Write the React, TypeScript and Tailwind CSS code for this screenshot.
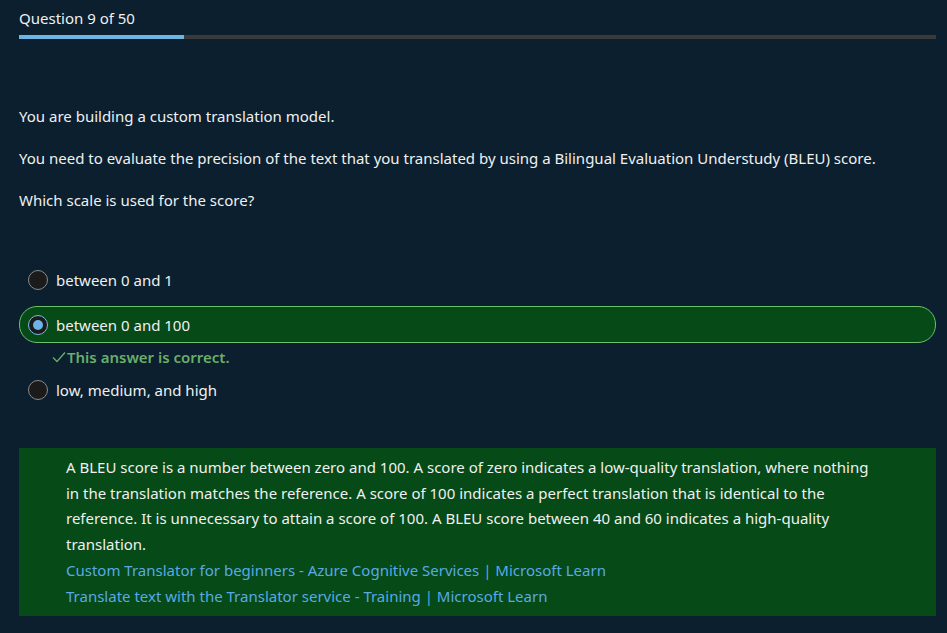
const options = [
  { id: 'a', label: 'between 0 and 1', selected: false },
  { id: 'b', label: 'between 0 and 100', selected: true },
  { id: 'c', label: 'low, medium, and high', selected: false },
]

function Radio({ selected }: { selected: boolean }) {
  if (selected) {
    return (
      <span className="flex h-5 w-5 shrink-0 items-center justify-center rounded-full border border-[#7fb8e6] bg-[#1b1b1b]">
        <span className="h-[10px] w-[10px] rounded-full bg-[#6cb4e8]" />
      </span>
    )
  }
  return <span className="h-5 w-5 shrink-0 rounded-full border border-[#8a8a8a] bg-[#1b1b1b]" />
}

export default function App() {
  return (
    <div
      className="min-h-[633px] w-[947px] bg-[#0b1f2e] px-[19px] pt-[8px] text-[15px] text-[#f0f0f0]"
      style={{ fontFamily: '"Segoe UI", "Noto Sans", sans-serif' }}
    >
      <p className="leading-[20px]">Question 9 of 50</p>
      <div className="mt-[7px] flex h-[4px] w-[917px] bg-[#3a3a3a]">
        <div className="h-full w-[165px] bg-[#6cb4e4]" />
      </div>

      <div className="mt-[67px] space-y-[22px] leading-[20px]">
        <p>You are building a custom translation model.</p>
        <p>
          You need to evaluate the precision of the text that you translated by using a Bilingual
          Evaluation Understudy (BLEU) score.
        </p>
        <p>Which scale is used for the score?</p>
      </div>

      <div className="mt-[51px] w-[917px]">
        {options.map((o, i) => (
          <div key={o.id} className={i === 0 ? 'mt-[8px]' : i === 1 ? 'mt-[8px]' : 'mt-[4px]'}>
            <div
              className={
                o.selected
                  ? 'flex h-[37px] items-center gap-[8px] rounded-[18px] border border-[#6cbf6c] bg-[#064a18] pl-[8px]'
                  : 'flex h-[37px] items-center gap-[8px] pl-[9px]'
              }
            >
              <Radio selected={o.selected} />
              <span className="leading-[20px]">{o.label}</span>
            </div>
            {o.selected && (
              <p className="mt-[4px] flex items-center pl-[33px] font-semibold leading-[20px] text-[#6aae6a]">
                <svg width="14" height="12" viewBox="0 0 14 12" className="mr-[1px]">
                  <path d="M1 6.5 L5 10.5 L13 1.5" fill="none" stroke="#6aae6a" strokeWidth="1.3" />
                </svg>
                This answer is correct.
              </p>
            )}
          </div>
        ))}
      </div>

      <div className="mt-[40px] w-[917px] bg-[#054a17] py-[7px] pl-[47px] pr-[58px] leading-[25.7px]">
        <p>
          A BLEU score is a number between zero and 100. A score of zero indicates a low-quality
          translation, where nothing in the translation matches the reference. A score of 100
          indicates a perfect translation that is identical to the reference. It is unnecessary to
          attain a score of 100. A BLEU score between 40 and 60 indicates a high-quality translation.
        </p>
        <a className="block text-[#5aa9e6]" href="#">
          Custom Translator for beginners - Azure Cognitive Services | Microsoft Learn
        </a>
        <a className="block text-[#5aa9e6]" href="#">
          Translate text with the Translator service - Training | Microsoft Learn
        </a>
      </div>
    </div>
  )
}
